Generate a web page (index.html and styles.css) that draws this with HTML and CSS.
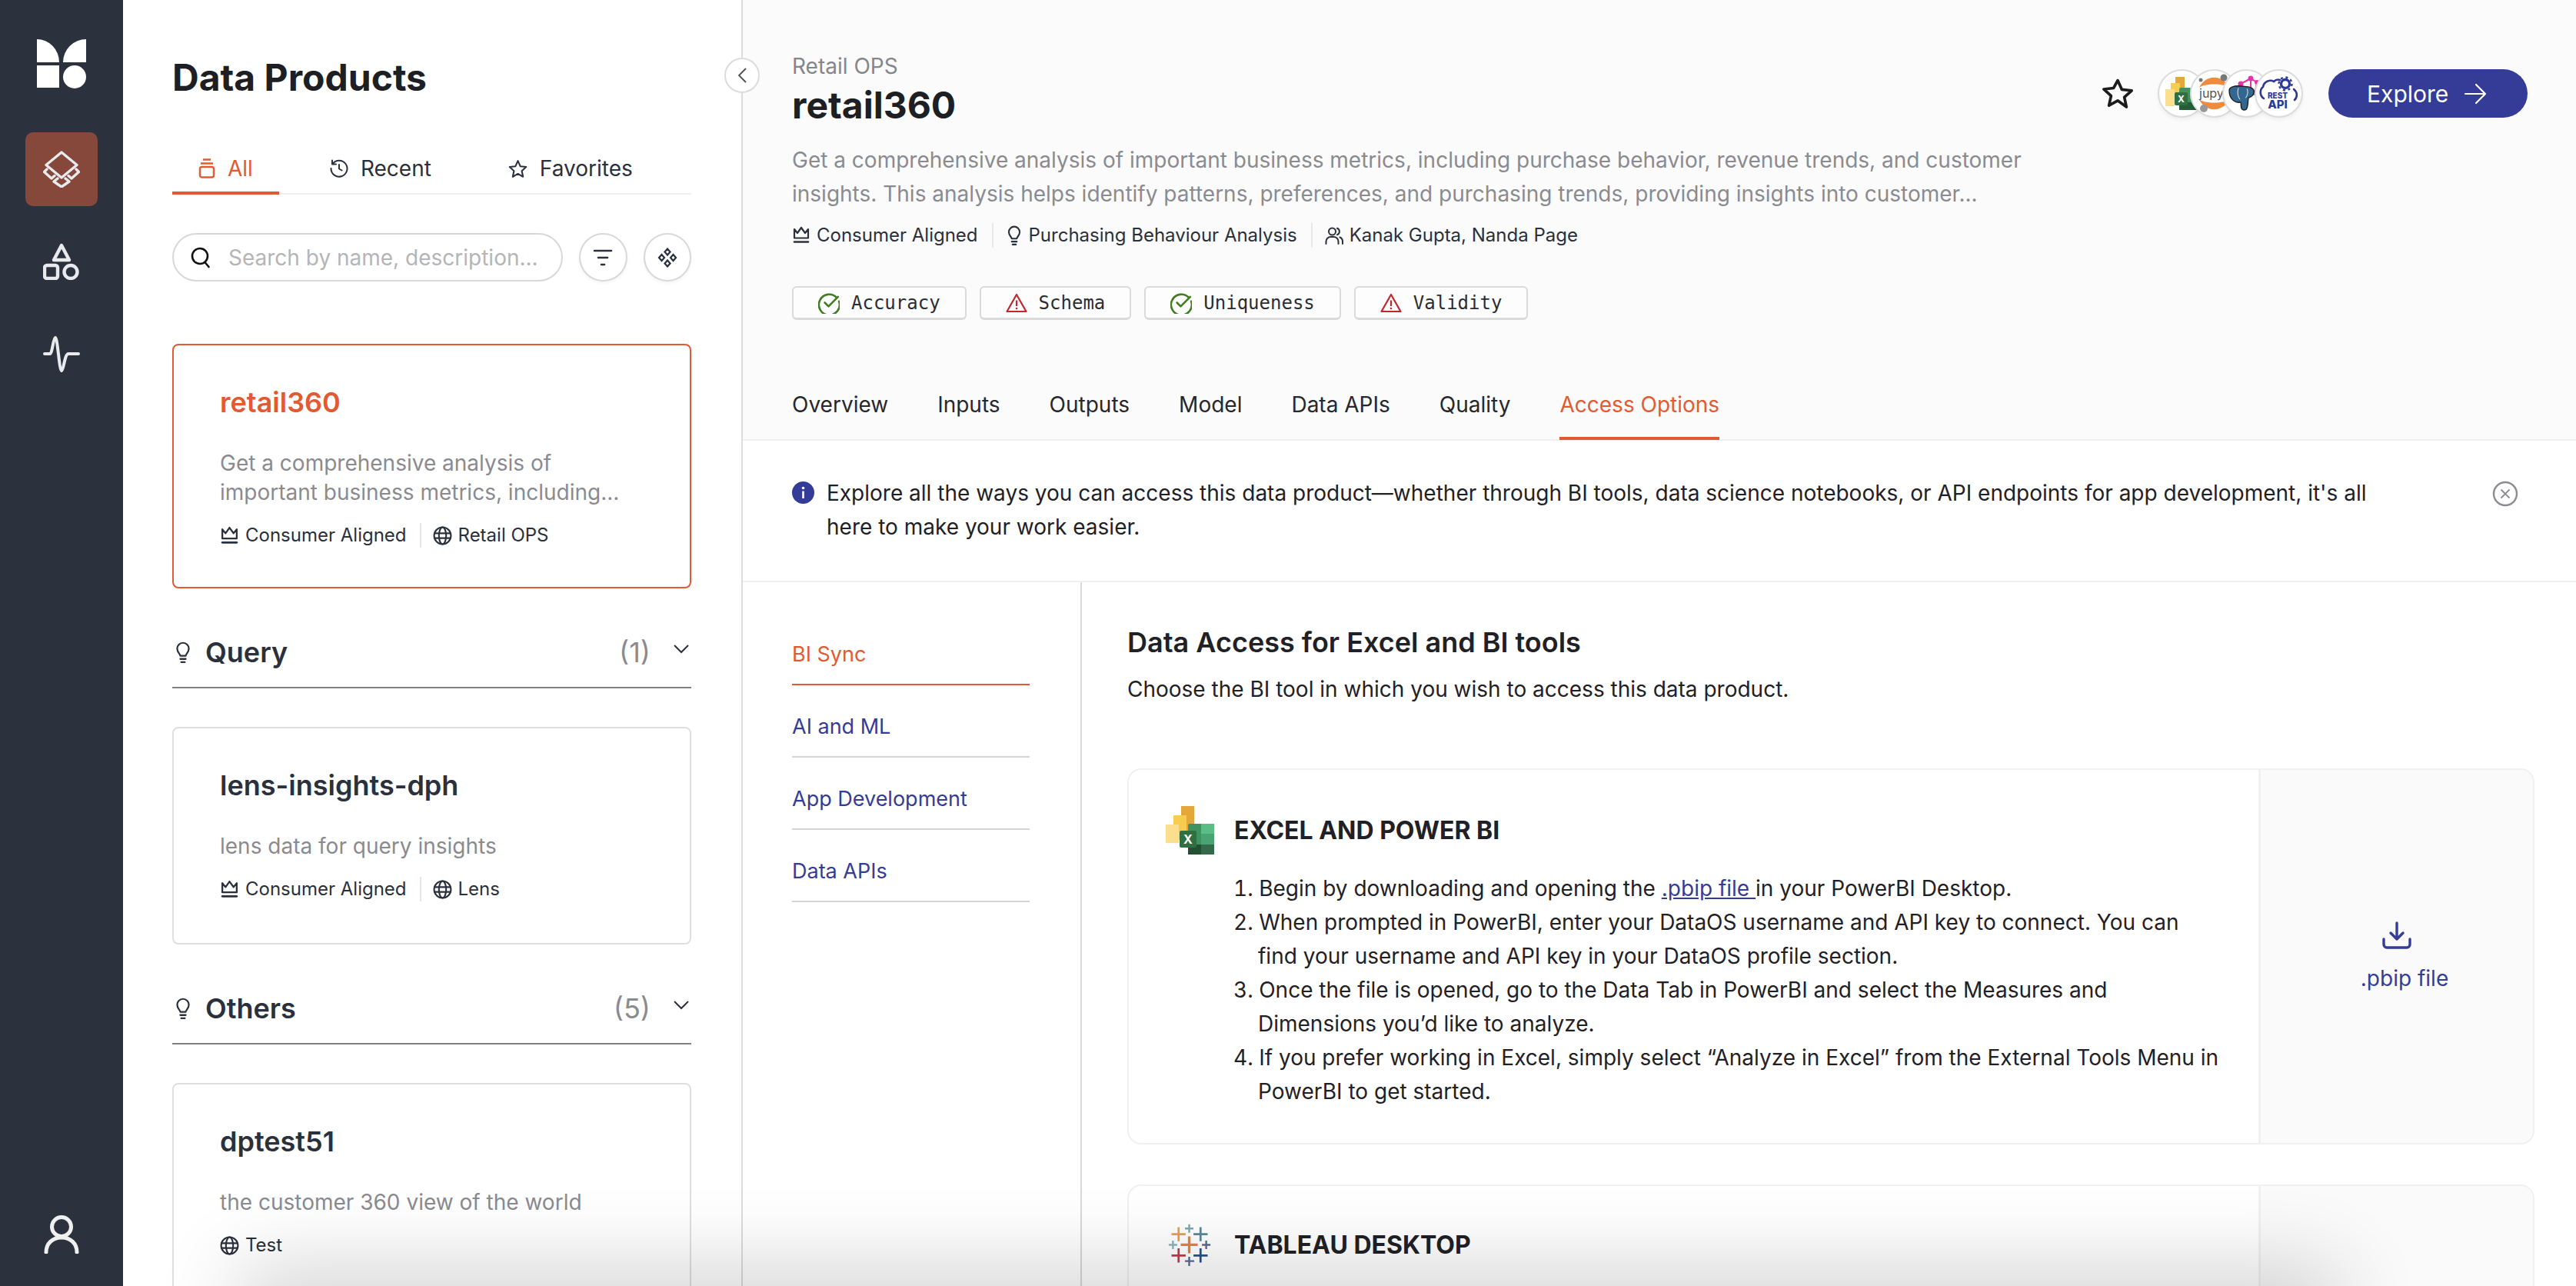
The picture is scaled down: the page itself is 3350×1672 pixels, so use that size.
FILE: index.html
```html
<!DOCTYPE html>
<html lang="en">
<head>
    <meta charset="UTF-8">
    <title>Data Products - retail360</title>
    <link rel="stylesheet" href="styles.css">
</head>
<body>
    <!-- shared icons -->
    <svg class="icon-defs" width="0" height="0">
        <symbol id="i-crown" viewBox="0 0 24 24"><path d="M3 4l4 5 5-7 5 7 4-5v11.500H3z" fill="none" stroke="currentColor" stroke-width="2.200" stroke-linejoin="round"/><path d="M3 20.500h18" stroke="currentColor" stroke-width="2.600" stroke-linecap="round"/></symbol>
        <symbol id="i-bulb" viewBox="4 0 16 24"><path d="M9 16c0-2-3.500-3.500-3.500-8a6.500 6.500 0 0 1 13 0c0 4.500-3.500 6-3.500 8z" fill="none" stroke="currentColor" stroke-width="1.900" stroke-linejoin="round"/><path d="M9 19.500h6M10 23h4" stroke="currentColor" stroke-width="2" stroke-linecap="round"/></symbol>
        <symbol id="i-globe" viewBox="0 0 24 24"><g fill="none" stroke="currentColor" stroke-width="2"><circle cx="12" cy="12" r="10.500"/><ellipse cx="12" cy="12" rx="4.500" ry="10.500"/><path d="M1.500 9h21M1.500 15h21"/></g></symbol>
        <symbol id="i-people" viewBox="0 0 24 24"><g fill="none" stroke="currentColor" stroke-width="2" stroke-linecap="round"><circle cx="9.500" cy="7" r="4.500"/><path d="M1.500 23v-3a6 6 0 0 1 6-6h4a6 6 0 0 1 6 6v3M16 2.800a4.500 4.500 0 0 1 0 8.400M19.500 14.500a6 6 0 0 1 3.500 5.500v3"/></g></symbol>
        <symbol id="i-ok" viewBox="1 1 26 26"><path d="M23.500 7.500A12.500 12.500 0 1 0 26.200 12" fill="none" stroke="#3f7d20" stroke-width="2.400" stroke-linecap="round"/><path d="M9 13.500l4.500 4.500L25 6.500" fill="none" stroke="#3f7d20" stroke-width="2.400" stroke-linecap="round" stroke-linejoin="round"/></symbol>
        <symbol id="i-warn" viewBox="0 0 28 28"><path d="M14 3L26.500 25h-25z" fill="none" stroke="#c1272d" stroke-width="2.200" stroke-linejoin="round"/><path d="M14 10.500v7.500" stroke="#c1272d" stroke-width="2.200"/><circle cx="14" cy="21" r="1.300" fill="#c1272d"/></symbol>
        <symbol id="i-chev" viewBox="0 0 20 12"><path d="M1 1l9 9 9-9" fill="none" stroke="currentColor" stroke-width="2"/></symbol>
        <symbol id="i-download" viewBox="0 0 38 36"><path d="M19 2v20M11 15l8 8 8-8" fill="none" stroke="currentColor" stroke-width="3.400" stroke-linecap="round" stroke-linejoin="round"/><path d="M2 23v7a4 4 0 0 0 4 4h26a4 4 0 0 0 4-4v-7" fill="none" stroke="currentColor" stroke-width="3.400" stroke-linecap="round"/></symbol>
    </svg>

    <div class="app">
        <nav class="rail">
            <svg class="rail-logo" width="64" height="64" viewBox="0 0 64 64"><path d="M0 0a29 30 0 0 1 29 30H0zM64 0a30 30 0 0 0-30 30h30zM0 34h29v29H0z" fill="#fff"/><circle cx="49" cy="49" r="15" fill="#fff"/></svg>
            <a class="rail-active">
                <svg width="48" height="48" viewBox="0 0 48 48" fill="none" stroke="#e9eaee" stroke-width="3.400" stroke-linejoin="round" stroke-linecap="round"><path d="M24 2l20 16.500L24 35 4 18.500z"/><path d="M5 24l-3.500 3.500L11 36l4-3.500M43 24l3.500 3.500L37 36l-4-3.500M19 36l-5 4 10 7 10-7-5-4"/></svg>
            </a>
            <svg class="rail-icon" width="48" height="48" viewBox="0 0 48 48" fill="none" stroke="#e9eaee" stroke-width="4.400" stroke-linejoin="round"><path d="M24 3l10 19H14z"/><rect x="2" y="29" width="17" height="17" rx="3"/><circle cx="36" cy="37.500" r="8.500"/></svg>
            <svg class="rail-icon rail-pulse" width="48" height="48" viewBox="0 0 48 48" fill="none" stroke="#e9eaee" stroke-width="4" stroke-linejoin="round" stroke-linecap="round"><path d="M2 24h7c3 0 4-20 7-21 3 1 5 42 8 43 3-1 4-22 9-22h13"/></svg>
            <svg class="rail-user" width="46" height="50" viewBox="0 0 46 50" fill="none" stroke="#f0f0f0" stroke-width="5" stroke-linecap="round"><circle cx="23" cy="15" r="12.500"/><path d="M3 48c0-11 8-19 20-19s20 8 20 19"/></svg>
        </nav>

        <aside class="panel">
            <button class="collapse-btn">
                <svg width="12" height="20" viewBox="0 0 12 20"><path d="M11 1l-9 9 9 9" fill="none" stroke="#4b4f57" stroke-width="1.800"/></svg>
            </button>
            <h1 class="panel-title">Data Products</h1>
            <div class="panel-tabs">
                <a class="panel-tab panel-tab-active">
                    <svg width="22" height="26" viewBox="0 0 22 26" fill="none" stroke="currentColor" stroke-width="2.400"><path d="M6 1.500h10M3 6.500h16"/><rect x="2" y="11" width="18" height="13.500" rx="2.500"/></svg>
                    All
                </a>
                <a class="panel-tab">
                    <svg width="24" height="24" viewBox="0 0 24 24" fill="none" stroke="currentColor" stroke-width="2" stroke-linecap="round" stroke-linejoin="round"><path d="M3.500 6A10.500 10.500 0 1 1 1.500 12M3 1.500V6.500H8M12 7v5.500l3.500 2"/></svg>
                    Recent
                </a>
                <a class="panel-tab">
                    <svg width="25" height="25" viewBox="0 0 24 24" fill="none" stroke="currentColor" stroke-width="2" stroke-linejoin="round"><path d="M12 2l3 6.800 7.300.8-5.400 5 1.500 7.300L12 18.200l-6.400 3.700 1.500-7.300-5.400-5 7.300-.8z"/></svg>
                    Favorites
                </a>
            </div>
            <div class="search-row">
                <div class="search-box">
                    <svg width="26" height="28" viewBox="0 0 26 28" fill="none" stroke="#111" stroke-width="2.600" stroke-linecap="round"><circle cx="12" cy="12" r="10"/><path d="M18.500 20l5 6"/></svg>
                    <input class="search-input" type="text" placeholder="Search by name, description...">
                </div>
                <button class="round-btn">
                    <svg width="26" height="24" viewBox="0 0 26 24" stroke="#2a303c" stroke-width="2.600" stroke-linecap="round"><path d="M2 3h22M7 12h12M11 21h4"/></svg>
                </button>
                <button class="round-btn">
                    <svg width="26" height="26" viewBox="0 0 26 26" fill="none" stroke="#2a303c" stroke-width="2.200"><path d="M13 1.500l3.500 4-3.500 4-3.500-4zM13 16.500l3.500 4-3.500 4-3.500-4zM5.500 9l3.500 4-3.500 4L2 13zM20.500 9l3.500 4-3.500 4-3.500-4z"/></svg>
                </button>
            </div>

            <div class="product-card product-card-active">
                <h3 class="product-name">retail360</h3>
                <p class="product-desc">Get a comprehensive analysis of important business metrics, including...</p>
                <div class="product-tags">
                    <span class="product-tag"><svg width="25" height="25"><use href="#i-crown"/></svg>Consumer Aligned</span>
                    <span class="product-tag"><svg width="25" height="25"><use href="#i-globe"/></svg>Retail OPS</span>
                </div>
            </div>

            <div class="group-head">
                <svg width="24" height="28"><use href="#i-bulb"/></svg>
                <span class="group-name">Query</span>
                <span class="group-count">(1)</span>
                <svg class="group-chev" width="20" height="12"><use href="#i-chev"/></svg>
            </div>
            <div class="product-card">
                <h3 class="product-name">lens-insights-dph</h3>
                <p class="product-desc">lens data for query insights</p>
                <div class="product-tags">
                    <span class="product-tag"><svg width="25" height="25"><use href="#i-crown"/></svg>Consumer Aligned</span>
                    <span class="product-tag"><svg width="25" height="25"><use href="#i-globe"/></svg>Lens</span>
                </div>
            </div>

            <div class="group-head">
                <svg width="24" height="28"><use href="#i-bulb"/></svg>
                <span class="group-name">Others</span>
                <span class="group-count">(5)</span>
                <svg class="group-chev" width="20" height="12"><use href="#i-chev"/></svg>
            </div>
            <div class="product-card">
                <h3 class="product-name">dptest51</h3>
                <p class="product-desc">the customer 360 view of the world</p>
                <div class="product-tags">
                    <span class="product-tag"><svg width="25" height="25"><use href="#i-globe"/></svg>Test</span>
                </div>
            </div>
        </aside>

        <main class="main">
            <header class="detail-head">
                <div class="detail-top">
                    <div class="detail-info">
                        <div class="detail-domain">Retail OPS</div>
                        <h2 class="detail-name">retail360</h2>
                        <p class="detail-desc">Get a comprehensive analysis of important business metrics, including purchase behavior, revenue trends, and customer<br>insights. This analysis helps identify patterns, preferences, and purchasing trends, providing insights into customer...</p>
                        <div class="detail-meta">
                            <span class="meta-item"><svg width="24" height="24"><use href="#i-crown"/></svg>Consumer Aligned</span>
                            <span class="meta-item"><svg width="22" height="26"><use href="#i-bulb"/></svg>Purchasing Behaviour Analysis</span>
                            <span class="meta-item"><svg width="24" height="24"><use href="#i-people"/></svg>Kanak Gupta, Nanda Page</span>
                        </div>
                    </div>
                    <div class="detail-actions">
                        <svg class="fav-star" width="44" height="44" viewBox="0 0 24 24" fill="none" stroke="#1c1c1c" stroke-width="2" stroke-linejoin="round"><path d="M12 2.500l2.900 6.400 7 .8-5.200 4.700 1.500 6.900L12 16.800l-6.200 3.500 1.500-6.900-5.200-4.700 7-.8z"/></svg>
                        <div class="avatars">
                            <div class="avatar">
                                <svg width="59" height="59" viewBox="0 0 59 59"><rect x="21" y="8" width="12" height="32" fill="#e3a73a"/><rect x="15" y="16" width="12" height="26" fill="#f7cc4f"/><rect x="8" y="24" width="12" height="22" fill="#fbdf8e"/><rect x="26" y="22" width="28" height="28" rx="2" fill="#3f9360"/><rect x="40" y="22" width="14" height="14" fill="#5cbd84"/><rect x="26" y="41" width="28" height="10" fill="#265c38"/><rect x="20" y="28" width="17" height="17" rx="2" fill="#2f6f42"/><text class="avatar-x" x="28.500" y="41">X</text></svg>
                            </div>
                            <div class="avatar">
                                <svg width="59" height="59" viewBox="0 0 59 59"><path d="M10 22a21 21 0 0 1 39 0c-6-6-33-6-39 0zM10 37a21 21 0 0 0 39 0c-6 6-33 6-39 0z" fill="#f08a3c"/><circle cx="12" cy="12" r="2.500" fill="#77787a"/><circle cx="42" cy="9" r="4.500" fill="#77787a"/><circle cx="16" cy="49" r="5" fill="#989898"/><text class="avatar-jup" x="10" y="35">jupyter</text></svg>
                            </div>
                            <div class="avatar">
                                <svg width="59" height="59" viewBox="0 0 59 59"><path d="M35 10L22 17M35 10l8 5M35 10v16M43 15L40 32" stroke="#e535ab" stroke-width="2" fill="none"/><circle cx="35" cy="10" r="3.500" fill="#e535ab"/><circle cx="22" cy="17" r="3.500" fill="#e535ab"/><circle cx="43" cy="15" r="3" fill="#e535ab"/><g transform="translate(-3 5) scale(.92)"><path d="M11 22c0-4 6-6 13-6s9 1 12 1 10 2 10 7c0 6-5 8-8 9-1 5 0 12-3 16-3 2-6 1-7-2-1-4 0-7-1-8-3 1-8 0-11-3-4-4-5-9-5-12z" fill="#336791" stroke="#1a1a1a" stroke-width="1.500"/><path d="M24 19c-2 6-1 12 2 16M36 20c2 4 1 9-2 13" fill="none" stroke="#fff" stroke-width="1"/></g></svg>
                            </div>
                            <div class="avatar">
                                <svg width="59" height="59" viewBox="0 0 59 59"><path d="M10 36c-5-3-6-11-1-15 1-7 9-10 14-7 2-2 5-3 8-2" fill="none" stroke="#2e3a97" stroke-width="2.600" stroke-linecap="round"/><path d="M49 24c5 4 5 10 1 14" fill="none" stroke="#2e3a97" stroke-width="2.600" stroke-linecap="round"/><circle cx="38" cy="17" r="5.500" fill="none" stroke="#2e3a97" stroke-width="3.400"/><circle cx="38" cy="17" r="8.500" fill="none" stroke="#2e3a97" stroke-width="2.400" stroke-dasharray="3 3.700"/><text class="avatar-rest" x="28" y="36">REST</text><text class="avatar-api" x="28" y="49">API</text></svg>
                            </div>
                        </div>
                        <a class="explore-btn">Explore
                            <svg width="30" height="28" viewBox="0 0 30 28" fill="none" stroke="#fff" stroke-width="2.200" stroke-linecap="round" stroke-linejoin="round"><path d="M2 14h26M16 2l12 12-12 12"/></svg>
                        </a>
                    </div>
                </div>
                <div class="quality-row">
                    <span class="quality-chip"><svg width="28" height="28"><use href="#i-ok"/></svg>Accuracy</span>
                    <span class="quality-chip"><svg width="28" height="28"><use href="#i-warn"/></svg>Schema</span>
                    <span class="quality-chip"><svg width="28" height="28"><use href="#i-ok"/></svg>Uniqueness</span>
                    <span class="quality-chip"><svg width="28" height="28"><use href="#i-warn"/></svg>Validity</span>
                </div>
                <div class="detail-tabs">
                    <a class="detail-tab">Overview</a>
                    <a class="detail-tab">Inputs</a>
                    <a class="detail-tab">Outputs</a>
                    <a class="detail-tab">Model</a>
                    <a class="detail-tab">Data APIs</a>
                    <a class="detail-tab">Quality</a>
                    <a class="detail-tab detail-tab-active">Access Options</a>
                </div>
            </header>

            <div class="notice">
                <svg class="notice-icon" width="29" height="29" viewBox="0 0 29 29"><circle cx="14.500" cy="14.500" r="14.500" fill="#343c97"/><circle cx="14.500" cy="8.500" r="1.800" fill="#fff"/><rect x="13.200" y="12.500" width="2.600" height="9.500" fill="#fff"/></svg>
                <p class="notice-text">Explore all the ways you can access this data product—whether through BI tools, data science notebooks, or API endpoints for app development, it's all here to make your work easier.</p>
                <svg class="notice-close" width="34" height="34" viewBox="0 0 34 34" fill="none" stroke="#8b8c91" stroke-width="2.400"><circle cx="17" cy="17" r="15"/><path d="M11.500 11.500l11 11M22.500 11.500l-11 11" stroke-width="1.800"/></svg>
            </div>

            <div class="access">
                <div class="access-nav">
                    <a class="access-link access-link-active">BI Sync</a>
                    <a class="access-link">AI and ML</a>
                    <a class="access-link">App Development</a>
                    <a class="access-link">Data APIs</a>
                </div>
                <div class="access-content">
                    <h3 class="access-title">Data Access for Excel and BI tools</h3>
                    <p class="access-sub">Choose the BI tool in which you wish to access this data product.</p>

                    <section class="tool-card">
                        <div class="tool-body">
                            <div class="tool-head">
                                <svg width="63" height="63" viewBox="0 0 63 63"><rect x="20" y="0" width="17" height="40" fill="#e3a73a"/><rect x="10" y="12" width="17" height="32" fill="#f7cc4f"/><rect x="0" y="24" width="17" height="24" fill="#fbdf8e"/><rect x="29" y="23" width="34" height="40" rx="2" fill="#3f9360"/><rect x="46" y="23" width="17" height="13" fill="#5cbd84"/><rect x="46" y="36" width="17" height="14" fill="#4aa372"/><rect x="29" y="50" width="17" height="13" fill="#234f32"/><rect x="46" y="50" width="17" height="13" fill="#34694a"/><rect x="18" y="32" width="22" height="22" rx="2" fill="#2f6f42"/><text class="tool-x" x="29" y="49">X</text></svg>
                                <h4 class="tool-name">EXCEL AND POWER BI</h4>
                            </div>
                            <ol class="tool-steps">
                                <li>Begin by downloading and opening the <a class="tool-link">.pbip file </a>in your PowerBI Desktop.</li>
                                <li>When prompted in PowerBI, enter your DataOS username and API key to connect. You can find your username and API key in your DataOS profile section.</li>
                                <li>Once the file is opened, go to the Data Tab in PowerBI and select the Measures and Dimensions you’d like to analyze.</li>
                                <li>If you prefer working in Excel, simply select “Analyze in Excel” from the External Tools Menu in PowerBI to get started.</li>
                            </ol>
                        </div>
                        <a class="tool-download">
                            <svg width="38" height="36"><use href="#i-download"/></svg>
                            <span class="tool-file">.pbip file</span>
                        </a>
                    </section>

                    <section class="tool-card tool-card-short">
                        <div class="tool-body">
                            <div class="tool-head">
                                <svg class="tableau-logo" width="58" height="58" viewBox="0 0 63 63" stroke-width="2.600" fill="none">
                                    <path d="M31 20v24M19 32h24" stroke="#e8823d" stroke-width="3.600"/>
                                    <path d="M16 7v20M6 17h20" stroke="#e8a04c" stroke-width="3"/>
                                    <path d="M47 7v20M37 17h20" stroke="#5b879b" stroke-width="3"/>
                                    <path d="M31 3v12M25 9h12" stroke="#7ba7b3"/>
                                    <path d="M8 26v12M2 32h12" stroke="#8fb3bd"/>
                                    <path d="M55 26v12M49 32h12" stroke="#5a6a9c"/>
                                    <path d="M16 37v20M6 47h20" stroke="#c7384a" stroke-width="3"/>
                                    <path d="M47 37v20M37 47h20" stroke="#2a5189" stroke-width="3"/>
                                    <path d="M31 49v13M25 55h13" stroke="#596a9a"/>
                                </svg>
                                <h4 class="tool-name">TABLEAU DESKTOP</h4>
                            </div>
                        </div>
                        <a class="tool-download">
                            <svg width="38" height="36"><use href="#i-download"/></svg>
                        </a>
                    </section>
                </div>
            </div>
        </main>
    </div>
    <div class="bottom-shade"></div>
</body>
</html>
```

FILE: styles.css
```css
* {
    box-sizing: border-box;
}

html, body {
    margin: 0;
    height: 100%;
    overflow: hidden;
}

body {
    font-family: 'Inter', 'Liberation Sans', sans-serif;
    color: #1f2126;
    background-color: #fff;
}

h1, h2, h3, h4, p, ol {
    margin: 0;
    padding: 0;
}

svg {
    flex-shrink: 0;
    display: block;
}

.icon-defs {
    position: absolute;
}

.app {
    display: flex;
    height: 1672px;
    overflow: hidden;
}

/* Left rail */
.rail {
    width: 160px;
    flex-shrink: 0;
    background-color: #2b323e;
    display: flex;
    flex-direction: column;
    align-items: center;
    padding: 51px 0 42px;
}

.rail-active {
    width: 94px;
    height: 96px;
    margin-top: 57px;
    border-radius: 10px;
    background-color: #86483a;
    display: flex;
    align-items: center;
    justify-content: center;
}

.rail-icon {
    margin-top: 48px;
}

.rail-pulse {
    margin-top: 72px;
}

.rail-user {
    margin-top: auto;
}

/* Products panel */
.panel {
    width: 806px;
    flex-shrink: 0;
    position: relative;
    z-index: 2;
    padding: 72px 65px 0 64px;
    border-right: 2px solid #dcdcdc;
    background-color: #fff;
}

.collapse-btn {
    position: absolute;
    top: 75px;
    right: -24px;
    width: 46px;
    height: 46px;
    padding: 0;
    border: 2px solid #dcdcdc;
    border-radius: 50%;
    background-color: #fff;
    display: flex;
    align-items: center;
    justify-content: center;
}

.panel-title {
    font-size: 48px;
    line-height: 58px;
    font-weight: 700;
    color: #1d1f24;
}

.panel-tabs {
    display: flex;
    gap: 32px;
    margin-top: 59px;
    border-bottom: 2px solid #f0f0f2;
}

.panel-tab {
    height: 64px;
    padding: 0 34px 0;
    margin-bottom: -2px;
    display: flex;
    align-items: center;
    gap: 16px;
    font-size: 28px;
    color: #2a303c;
    border-bottom: 4px solid transparent;
}

.panel-tab-active {
    color: #e25a32;
    border-bottom-color: #e25a32;
}

.search-row {
    display: flex;
    gap: 21px;
    margin-top: 50px;
}

.search-box {
    width: 508px;
    height: 63px;
    padding: 0 22px;
    display: flex;
    align-items: center;
    gap: 23px;
    border: 2px solid #d8d8d8;
    border-radius: 32px;
}

.search-input {
    flex: 1;
    min-width: 0;
    border: none;
    outline: none;
    padding: 0;
    font-family: inherit;
    font-size: 28px;
}

.search-input::placeholder {
    color: #b4b5b9;
}

.round-btn {
    width: 63px;
    height: 63px;
    padding: 0;
    border: 2px solid #d8d8d8;
    border-radius: 50%;
    background-color: #fff;
    display: flex;
    align-items: center;
    justify-content: center;
    box-shadow: 0 2px 4px rgba(0, 0, 0, 0.05);
}

.product-card {
    margin-top: 50px;
    padding: 52px 60px 54px;
    border: 2px solid #dfdfdf;
    border-radius: 8px;
}

.product-card-active {
    margin-top: 81px;
    padding-bottom: 51px;
    border-color: #e25a32;
}

.product-name {
    font-size: 36px;
    line-height: 44px;
    font-weight: 600;
    color: #2a303c;
}

.product-card-active .product-name {
    color: #e25a32;
}

.product-desc {
    margin-top: 38px;
    font-size: 28px;
    line-height: 38px;
    color: #8a8b90;
}

.product-tags {
    display: flex;
    margin-top: 21px;
}

.product-tag {
    display: flex;
    align-items: center;
    gap: 8px;
    font-size: 24px;
    line-height: 32px;
    color: #2a303c;
    padding-right: 17px;
}

.product-tag + .product-tag {
    padding-left: 15px;
    border-left: 2px solid #e6e6e6;
}

.group-head {
    margin-top: 61px;
    padding: 0 3px 23px 2px;
    display: flex;
    align-items: center;
    border-bottom: 2px solid #808187;
    color: #2a303c;
}

.group-name {
    margin-left: 17px;
    font-size: 36px;
    line-height: 44px;
    font-weight: 600;
}

.group-count {
    margin-left: auto;
    font-size: 36px;
    color: #8a8b90;
}

.group-chev {
    margin: -8px 0 0 30px;
}

/* Main column */
.main {
    flex: 1;
    min-width: 0;
    display: flex;
    flex-direction: column;
}

.detail-head {
    height: 573px;
    padding: 69px 63px 0 64px;
    background-color: #fbfbfb;
    border-bottom: 2px solid #f0f0f2;
}

.detail-top {
    display: flex;
    justify-content: space-between;
    align-items: flex-start;
}

.detail-domain {
    font-size: 28px;
    line-height: 34px;
    color: #85868b;
}

.detail-name {
    margin-top: 5px;
    font-size: 48px;
    line-height: 58px;
    font-weight: 700;
    color: #1d1f24;
}

.detail-desc {
    margin-top: 20px;
    font-size: 28px;
    line-height: 44px;
    color: #8a8b90;
}

.detail-meta {
    display: flex;
    margin-top: 16px;
}

.meta-item {
    display: flex;
    align-items: center;
    gap: 8px;
    font-size: 24px;
    line-height: 32px;
    color: #2a303c;
    padding-right: 18px;
}

.meta-item + .meta-item {
    padding-left: 16px;
    border-left: 2px solid #e8e8e8;
}

.detail-actions {
    display: flex;
    align-items: center;
    margin-top: 21px;
}

.avatars {
    display: flex;
    margin-left: 30px;
}

.avatar {
    width: 63px;
    height: 63px;
    border: 2px solid #dcdcdc;
    border-radius: 50%;
    background-color: #fff;
    overflow: hidden;
    box-shadow: 0 3px 5px rgba(0, 0, 0, 0.05);
}

.avatar + .avatar {
    margin-left: -21px;
}

.avatar-x {
    font: 700 12px 'Inter', sans-serif;
    fill: #fff;
    text-anchor: middle;
}

.avatar-jup {
    font: 400 16px 'Inter', sans-serif;
    fill: #555;
}

.avatar-rest {
    font: 800 10px 'Inter', sans-serif;
    fill: #2e3a97;
    text-anchor: middle;
}

.avatar-api {
    font: 800 15px 'Inter', sans-serif;
    fill: #2e3a97;
    text-anchor: middle;
}

.explore-btn {
    width: 259px;
    height: 63px;
    margin-left: 33px;
    padding-left: 50px;
    display: flex;
    align-items: center;
    gap: 20px;
    border-radius: 32px;
    background-color: #343c97;
    color: #fff;
    font-size: 30px;
}

.quality-row {
    display: flex;
    gap: 17px;
    margin-top: 50px;
}

.quality-chip {
    height: 44px;
    padding: 0 32px;
    display: flex;
    align-items: center;
    gap: 15px;
    border: 2px solid #dadada;
    border-bottom-width: 3px;
    border-radius: 6px;
    background-color: #fdfdfd;
    font-family: 'DejaVu Sans Mono', 'Liberation Mono', monospace;
    font-size: 24px;
    color: #2a2d33;
}

.detail-tabs {
    display: flex;
    gap: 64px;
    margin-top: 93px;
}

.detail-tab {
    height: 63px;
    font-size: 28px;
    line-height: 34px;
    color: #26282d;
}

.detail-tab-active {
    color: #e25a32;
    border-bottom: 4px solid #e25a32;
}

.notice {
    height: 184px;
    padding: 46px 75px 0 64px;
    display: flex;
    border-bottom: 2px solid #f0f0f4;
}

.notice-icon {
    margin-top: 7px;
}

.notice-text {
    width: 2030px;
    margin-left: 16px;
    font-size: 28px;
    line-height: 44px;
    color: #1f2126;
}

.notice-close {
    margin: 6px 0 0 auto;
}

.access {
    flex: 1;
    min-height: 0;
    display: flex;
}

.access-nav {
    width: 441px;
    flex-shrink: 0;
    padding: 40px 66px 0 64px;
    border-right: 2px solid #d8d8d8;
}

.access-link {
    display: block;
    height: 94px;
    padding-top: 37px;
    font-size: 27px;
    line-height: 34px;
    color: #343c97;
    border-bottom: 2px solid #d4d4d6;
}

.access-link-active {
    color: #e25a32;
    border-bottom-color: #e25a32;
}

.access-content {
    flex: 1;
    min-width: 0;
    padding: 56px 54px 0 59px;
}

.access-title {
    font-size: 36px;
    line-height: 44px;
    font-weight: 600;
    color: #1f2126;
}

.access-sub {
    margin-top: 22px;
    font-size: 28px;
    line-height: 34px;
    color: #1f2126;
}

.tool-card {
    display: flex;
    margin-top: 52px;
    border: 2px solid #f0f0f2;
    border-radius: 18px;
    overflow: hidden;
}

.access-sub + .tool-card {
    margin-top: 86px;
}

.tool-card-short {
    min-height: 350px;
}

.tool-body {
    flex: 1;
    min-width: 0;
    padding: 47px 50px 45px 48px;
}

.tool-head {
    display: flex;
    align-items: center;
    gap: 26px;
}

.tableau-logo {
    margin: 0 3px 0 2px;
}

.tool-name {
    font-size: 32px;
    font-weight: 700;
    color: #1f2126;
}

.tool-x {
    font: 700 16px 'Inter', sans-serif;
    fill: #fff;
    text-anchor: middle;
}

.tool-steps {
    margin: 22px 0 0 88px;
    font-size: 28px;
    line-height: 44px;
    color: #1f2126;
    list-style-position: inside;
}

.tool-steps li {
    padding-left: 32px;
    text-indent: -32px;
}

.tool-link {
    color: #343c97;
    text-decoration: underline;
}

.tool-download {
    width: 357px;
    flex-shrink: 0;
    display: flex;
    flex-direction: column;
    align-items: center;
    justify-content: center;
    gap: 21px;
    border-left: 3px solid #f0f0f5;
    background-color: #fafafb;
    color: #343c97;
}

.tool-file {
    padding-left: 20px;
    font-size: 28px;
    line-height: 34px;
}

/* soft shade along the bottom edge */
.bottom-shade {
    position: absolute;
    z-index: 3;
    left: 330px;
    right: 330px;
    bottom: -50px;
    height: 50px;
    box-shadow: 0 0 110px 20px rgba(0, 0, 0, 0.2);
}
```
